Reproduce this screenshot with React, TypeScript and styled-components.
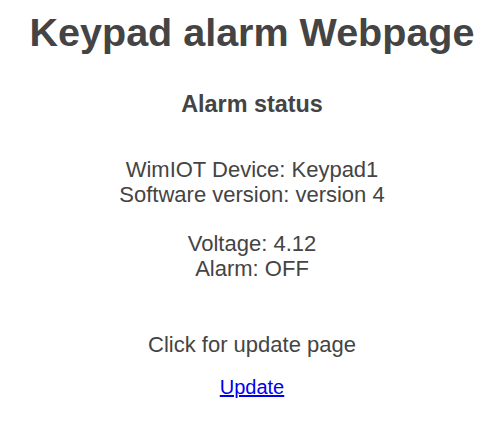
import React from 'react'
import styled, { createGlobalStyle } from 'styled-components'

const GlobalStyle = createGlobalStyle`
    body {
        margin: 0;
        background: #fff;
        font-family: "Liberation Sans", Arial, sans-serif;
    }
`

const Page = styled.div`
    display: flex;
    flex-direction: column;
    align-items: center;
    text-align: center;
    color: #444;
    padding: 9px 0 0 4px;
`

const Title = styled.h1`
    font-size: 39.5px;
    line-height: 46px;
    font-weight: bold;
    margin: 0;
`

const Subtitle = styled.h3`
    font-size: 23.4px;
    line-height: 27px;
    font-weight: bold;
    margin: 36px 0 0;
`

const Info = styled.p<{ $gap: number }>`
    font-size: 22px;
    line-height: 25.3px;
    margin: ${p => p.$gap}px 0 0;
`

const Link = styled.a`
    font-size: 20px;
    line-height: 23px;
    color: #0000ee;
    text-decoration: underline;
    margin-top: 19px;
`

const App = () => {
    return (
        <Page>
            <GlobalStyle />
            <Title>Keypad alarm Webpage</Title>
            <Subtitle>Alarm status</Subtitle>
            <Info $gap={39}>
                WimIOT Device: Keypad1<br />
                Software version: version 4
            </Info>
            <Info $gap={23}>
                Voltage: 4.12<br />
                Alarm: OFF
            </Info>
            <Info $gap={51}>Click for update page</Info>
            <Link href="#">Update</Link>
        </Page>
    )
}

export default App
